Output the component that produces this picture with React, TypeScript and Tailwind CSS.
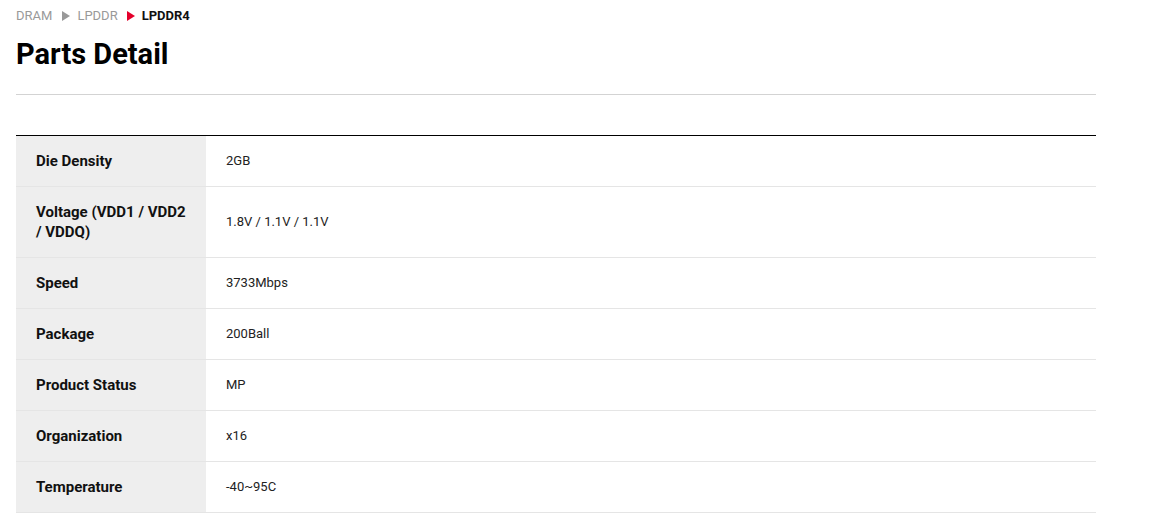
const specs: [string, string][] = [
  ['Die Density', '2GB'],
  ['Voltage (VDD1 / VDD2 / VDDQ)', '1.8V / 1.1V / 1.1V'],
  ['Speed', '3733Mbps'],
  ['Package', '200Ball'],
  ['Product Status', 'MP'],
  ['Organization', 'x16'],
  ['Temperature', '-40~95C'],
]

function Arrow({ className }: { className: string }) {
  return (
    <svg width="8" height="10" viewBox="0 0 8 10" className={className}>
      <path d="M0 0 L8 5 L0 10 Z" fill="currentColor" />
    </svg>
  )
}

export default function App() {
  return (
    <div className="min-h-screen bg-white font-['Roboto',sans-serif]">
      <div className="w-[1080px] ml-4">
        {/* Breadcrumb */}
        <nav className="flex items-center pt-2 text-[13px] leading-4">
          <span className="text-[#999999]">DRAM</span>
          <Arrow className="ml-[10px] mr-[7px] text-[#999999]" />
          <span className="text-[#999999]">LPDDR</span>
          <Arrow className="ml-[9px] mr-[7px] text-[#e4002b]" />
          <span className="font-bold text-[#111111]">LPDDR4</span>
        </nav>

        <h1 className="mt-[13px] text-[29px] leading-[34px] font-bold text-black">Parts Detail</h1>

        <div className="mt-[23px] h-px bg-[#d3d3d3]" />

        {/* Spec table */}
        <table className="mt-10 w-full border-collapse border-t border-black">
          <tbody>
            {specs.map(([label, value]) => (
              <tr key={label} className="border-b border-[#e5e5e5]">
                <th className="w-[190px] bg-[#eeeeee] px-5 py-[15px] text-left align-middle text-[15px] leading-5 font-bold text-[#111111]">
                  {label}
                </th>
                <td className="px-5 py-[15px] align-middle text-[13px] leading-5 text-[#222222]">{value}</td>
              </tr>
            ))}
          </tbody>
        </table>
      </div>
    </div>
  )
}
